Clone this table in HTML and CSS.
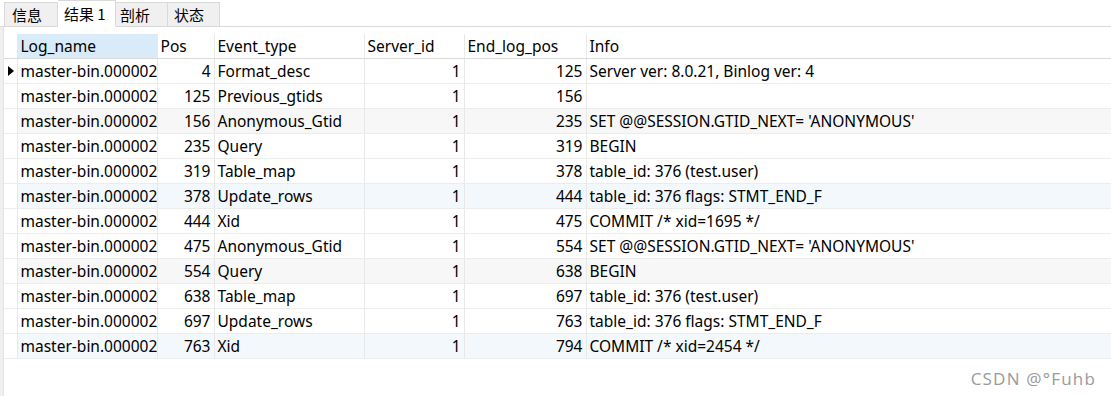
FILE: index.html
```html
<!DOCTYPE html>
<html>
<head>
<meta charset="utf-8">
<link rel="stylesheet" href="styles.css">
</head>
<body>
<div class="tabs">
  <div class="tab">信息</div>
  <div class="tab active">结果 1</div>
  <div class="tab">剖析</div>
  <div class="tab">状态</div>
</div>
<div class="main">
  <div class="gutter"></div>
  <div class="pane">
    <table class="grid">
      <colgroup>
        <col class="c-ind"><col class="c-log"><col class="c-pos"><col class="c-evt"><col class="c-srv"><col class="c-end"><col class="c-info">
      </colgroup>
      <thead>
        <tr><th class="ind"></th><th class="sel">Log_name</th><th>Pos</th><th>Event_type</th><th>Server_id</th><th>End_log_pos</th><th>Info</th></tr>
      </thead>
      <tbody>
        <tr><td class="ind"><span class="arrow"></span></td><td>master-bin.000002</td><td class="r">4</td><td>Format_desc</td><td class="r">1</td><td class="r">125</td><td>Server ver: 8.0.21, Binlog ver: 4</td></tr>
        <tr><td class="ind"></td><td>master-bin.000002</td><td class="r">125</td><td>Previous_gtids</td><td class="r">1</td><td class="r">156</td><td></td></tr>
        <tr class="gray"><td class="ind"></td><td>master-bin.000002</td><td class="r">156</td><td>Anonymous_Gtid</td><td class="r">1</td><td class="r">235</td><td>SET @@SESSION.GTID_NEXT= 'ANONYMOUS'</td></tr>
        <tr><td class="ind"></td><td>master-bin.000002</td><td class="r">235</td><td>Query</td><td class="r">1</td><td class="r">319</td><td>BEGIN</td></tr>
        <tr><td class="ind"></td><td>master-bin.000002</td><td class="r">319</td><td>Table_map</td><td class="r">1</td><td class="r">378</td><td>table_id: 376 (test.user)</td></tr>
        <tr class="blue"><td class="ind"></td><td>master-bin.000002</td><td class="r">378</td><td>Update_rows</td><td class="r">1</td><td class="r">444</td><td>table_id: 376 flags: STMT_END_F</td></tr>
        <tr><td class="ind"></td><td>master-bin.000002</td><td class="r">444</td><td>Xid</td><td class="r">1</td><td class="r">475</td><td>COMMIT /* xid=1695 */</td></tr>
        <tr><td class="ind"></td><td>master-bin.000002</td><td class="r">475</td><td>Anonymous_Gtid</td><td class="r">1</td><td class="r">554</td><td>SET @@SESSION.GTID_NEXT= 'ANONYMOUS'</td></tr>
        <tr class="gray"><td class="ind"></td><td>master-bin.000002</td><td class="r">554</td><td>Query</td><td class="r">1</td><td class="r">638</td><td>BEGIN</td></tr>
        <tr><td class="ind"></td><td>master-bin.000002</td><td class="r">638</td><td>Table_map</td><td class="r">1</td><td class="r">697</td><td>table_id: 376 (test.user)</td></tr>
        <tr><td class="ind"></td><td>master-bin.000002</td><td class="r">697</td><td>Update_rows</td><td class="r">1</td><td class="r">763</td><td>table_id: 376 flags: STMT_END_F</td></tr>
        <tr class="blue"><td class="ind"></td><td>master-bin.000002</td><td class="r">763</td><td>Xid</td><td class="r">1</td><td class="r">794</td><td>COMMIT /* xid=2454 */</td></tr>
      </tbody>
    </table>
    <div class="watermark">CSDN @°Fuhb</div>
  </div>
</div>
</body>
</html>
```
FILE: styles.css
```css
html, body {
  margin: 0;
  padding: 0;
  background: #ffffff;
}
body {
  width: 1111px;
  height: 396px;
  overflow: hidden;
  font-family: "Noto Sans", "Noto Sans CJK SC", sans-serif;
  font-size: 15.5px;
  color: #000;
}
.tabs {
  display: flex;
  align-items: flex-end;
  height: 26px;
  padding-left: 4px;
  border-bottom: 1px solid #d9d9d9;
  background: #fff;
}
.tab {
  box-sizing: border-box;
  height: 25px;
  width: 54px;
  margin-bottom: -1px;
  padding-left: 7px;
  background: #f0f0f0;
  border: 1px solid #d9d9d9;
  border-left: none;
  font-family: "Noto Sans CJK SC", sans-serif;
  font-size: 15px;
  line-height: 24px;
}
.tab:first-child {
  border-left: 1px solid #d9d9d9;
}
.tab.active {
  height: 27px;
  width: 58px;
  background: #fff;
  border-bottom: 1px solid #fff;
  padding-left: 6px;
  line-height: 25px;
}
.tab:nth-child(3) { width: 52px; padding-left: 4px; }
.tab:nth-child(4) { width: 52px; padding-left: 6px; }
.main {
  display: flex;
  height: 369px;
}
.gutter {
  width: 3px;
  border-right: 1px solid #e3e3e3;
  background: #f0f0f0;
}
.pane {
  position: relative;
  flex: 1;
  padding-top: 7px;
}
.grid {
  border-collapse: collapse;
  table-layout: fixed;
  width: 1107px;
}
.c-ind { width: 13px; }
.c-log { width: 140px; }
.c-pos { width: 57px; }
.c-evt { width: 150px; }
.c-srv { width: 100px; }
.c-end { width: 122px; }
th, td {
  height: 24px;
  padding: 0 3px;
  border-right: 1px solid #e8e8e8;
  border-bottom: 1px solid #ececec;
  text-align: left;
  font-weight: normal;
  white-space: nowrap;
  overflow: hidden;
  line-height: 24px;
}
th:last-child, td:last-child { border-right: none; }
th { border-bottom: 1px solid #dadada; }
th.sel { background: #d9eaf8; }
td.r { text-align: right; }
.ind { padding: 0; background: #fff; }
tr.gray td { background: #f7f7f7; }
tr.blue td { background: #f3f8fd; }
tr td.ind { background: #fff; }
.arrow {
  display: block;
  width: 0;
  height: 0;
  margin-left: 4px;
  border-top: 5px solid transparent;
  border-bottom: 5px solid transparent;
  border-left: 6px solid #000;
}
.watermark {
  position: absolute;
  right: 15px;
  bottom: 6px;
  font-family: "Open Sans", sans-serif;
  font-size: 17px;
  letter-spacing: 1.2px;
  color: #9a9a9a;
  text-shadow: 0 0 1px #fff;
}
```
